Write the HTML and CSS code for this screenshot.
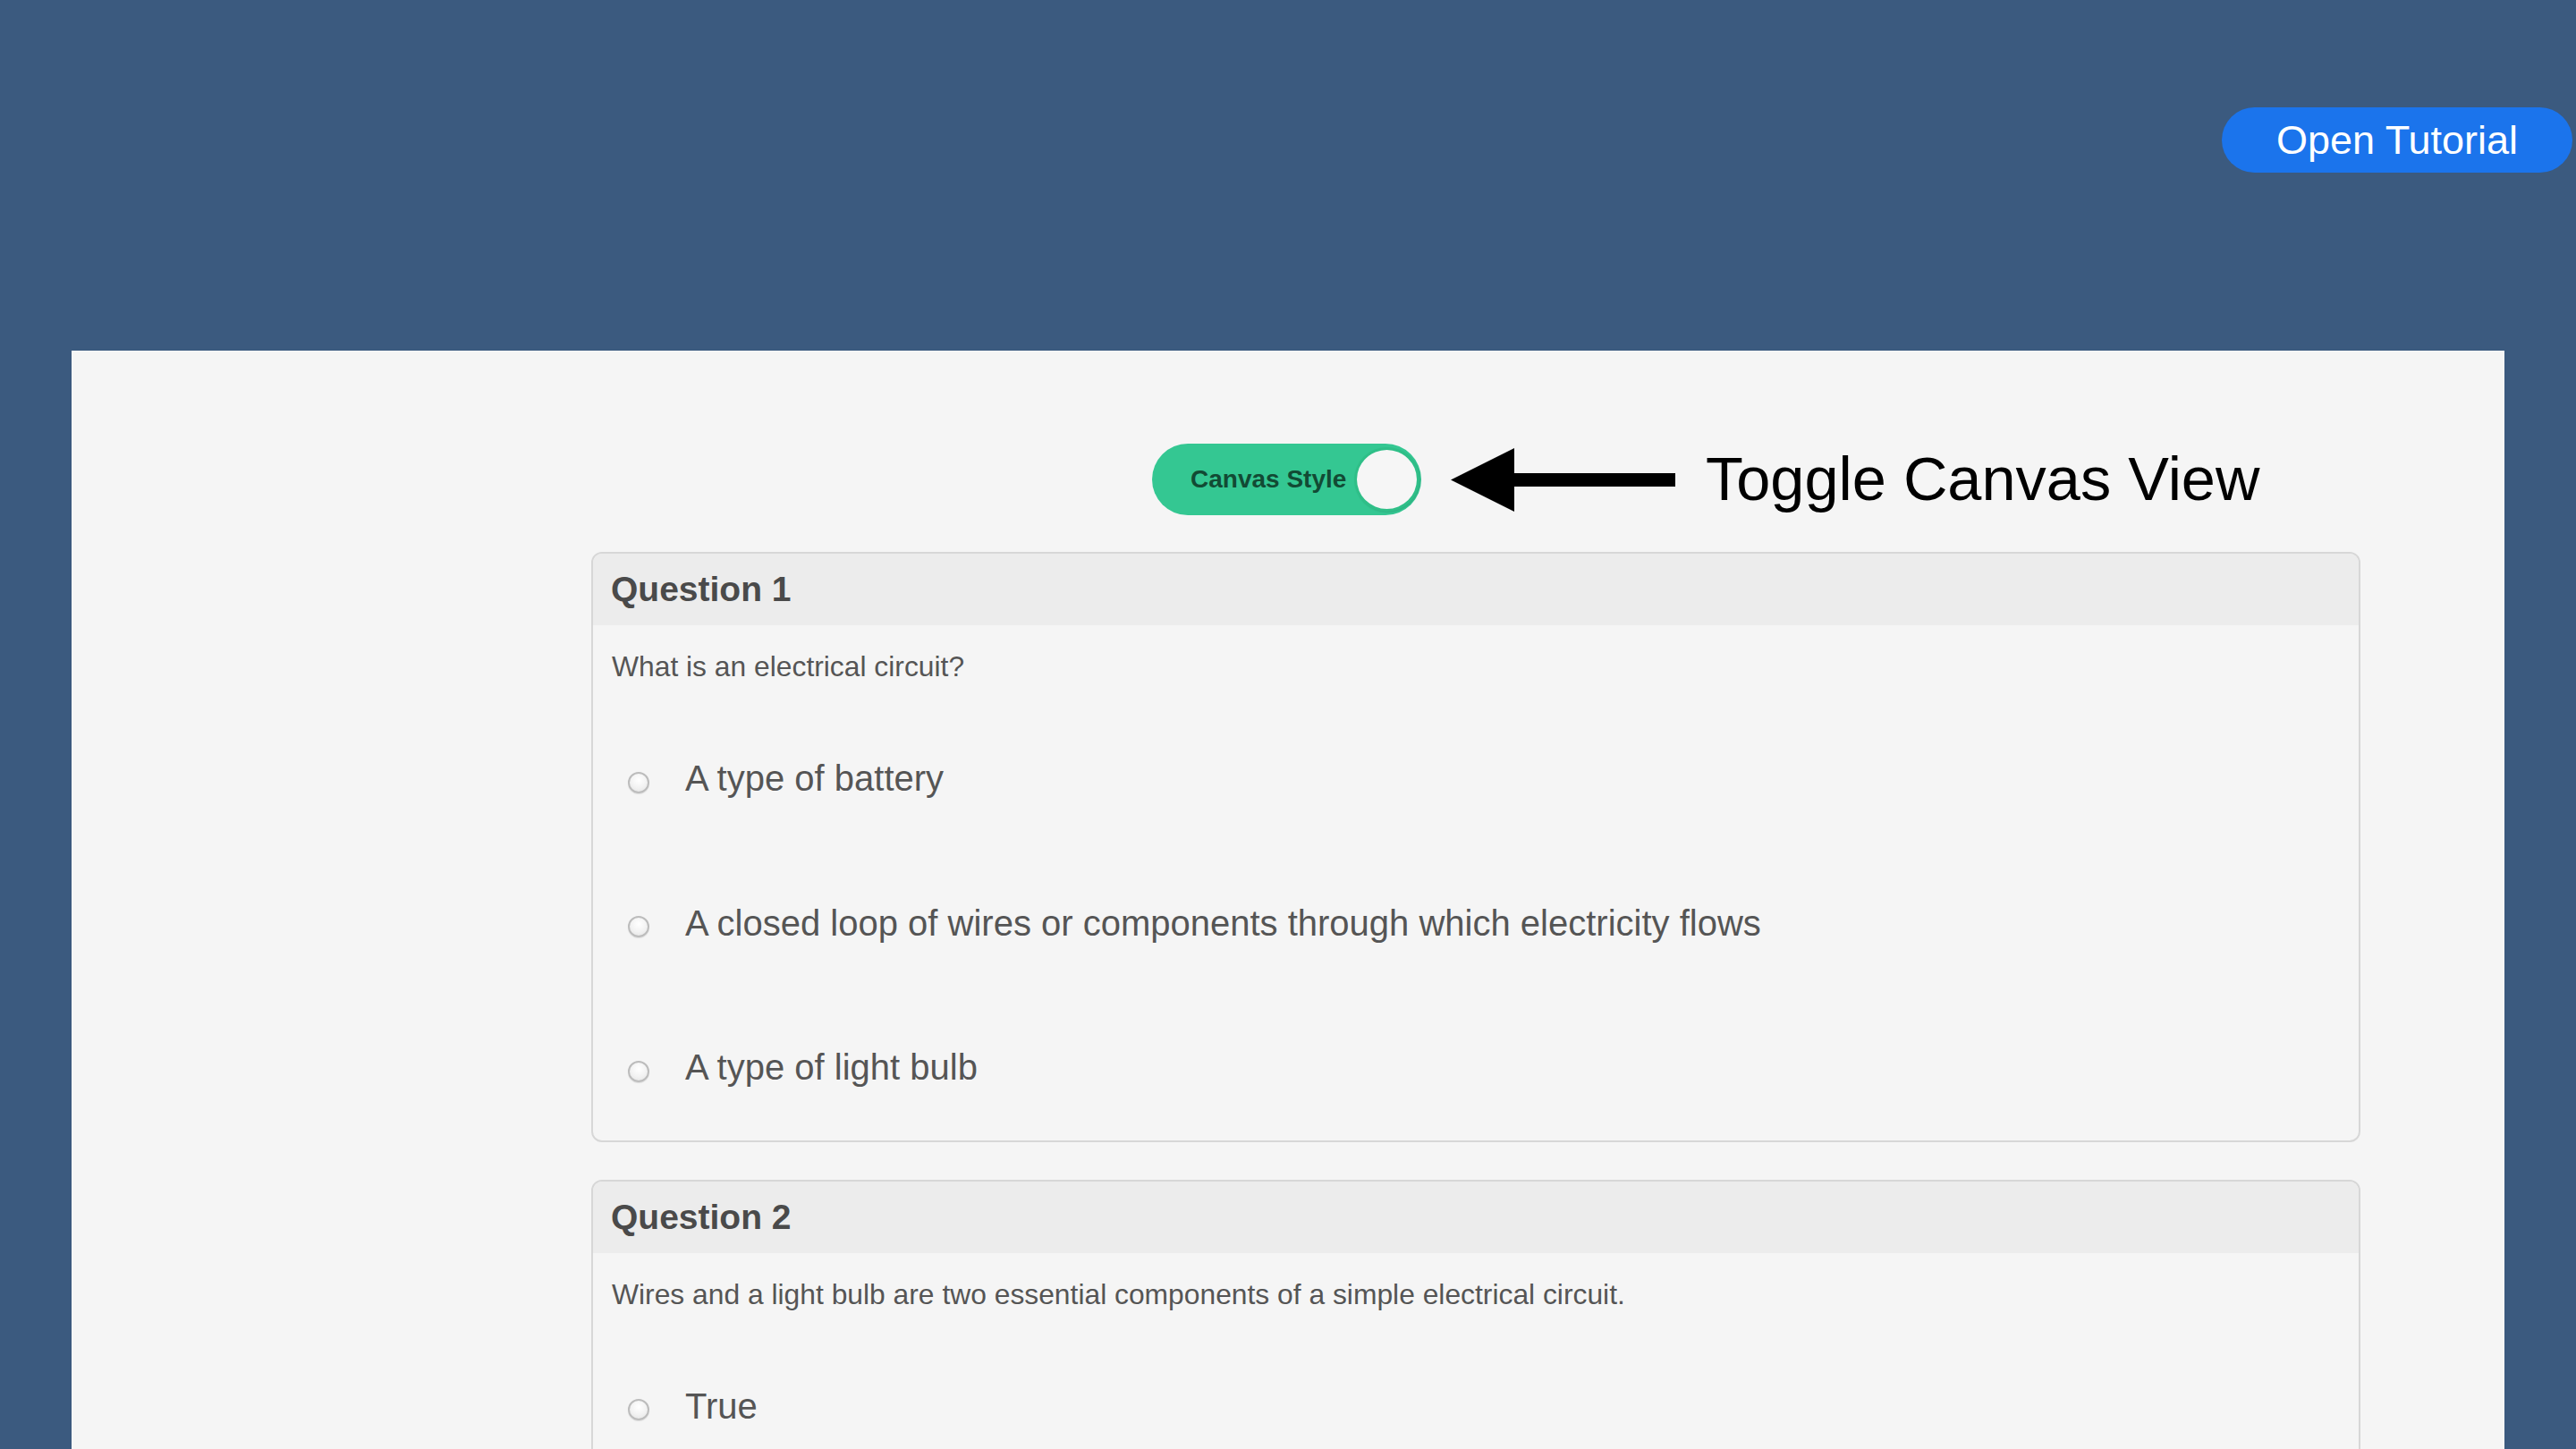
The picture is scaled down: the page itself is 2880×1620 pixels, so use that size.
FILE: index.html
```html
<!DOCTYPE html>
<html lang="en">
<head>
<meta charset="utf-8">
<title>Quiz</title>
<link rel="stylesheet" href="styles.css">
</head>
<body>
<header class="topbar">
  <button class="tutorial-btn">Open Tutorial</button>
</header>
<main class="panel">
  <div class="column">
    <div class="toggle-row">
      <div class="toggle">
        <span class="toggle-label">Canvas Style</span>
        <span class="toggle-knob"></span>
      </div>
      <svg class="arrow" width="251" height="71" viewBox="0 0 251 71">
        <polygon points="0,35.5 71,0 71,28 251,28 251,43 71,43 71,71" fill="#000"/>
      </svg>
      <span class="annotation">Toggle Canvas View</span>
    </div>

    <section class="card">
      <div class="card-header">Question 1</div>
      <div class="card-body">
        <p class="question">What is an electrical circuit?</p>
        <ul class="options">
          <li class="option"><span class="radio"></span><span class="option-text">A type of battery</span></li>
          <li class="option"><span class="radio"></span><span class="option-text">A closed loop of wires or components through which electricity flows</span></li>
          <li class="option"><span class="radio"></span><span class="option-text">A type of light bulb</span></li>
        </ul>
      </div>
    </section>

    <section class="card">
      <div class="card-header">Question 2</div>
      <div class="card-body">
        <p class="question">Wires and a light bulb are two essential components of a simple electrical circuit.</p>
        <ul class="options">
          <li class="option"><span class="radio"></span><span class="option-text">True</span></li>
        </ul>
      </div>
    </section>
  </div>
</main>
</body>
</html>
```

FILE: styles.css
```css
* { box-sizing: border-box; }

html, body {
  margin: 0;
  padding: 0;
}

body {
  background: #3b5a7f;
  font-family: "Liberation Sans", Arial, sans-serif;
  overflow: hidden;
}

.topbar {
  height: 392px;
  display: flex;
  justify-content: flex-end;
  align-items: flex-start;
  padding: 120px 4px 0 0;
}

.tutorial-btn {
  height: 73px;
  width: 392px;
  border: none;
  border-radius: 37px;
  background: #1b74ec;
  color: #ffffff;
  font-family: "Liberation Sans", Arial, sans-serif;
  font-size: 45px;
  padding: 0;
  cursor: pointer;
}

.panel {
  margin: 0 80px;
  background: #f5f5f5;
  min-height: 1300px;
  padding: 104px 161px 40px 581px;
}

.column {
  display: flex;
  flex-direction: column;
}

.toggle-row {
  display: flex;
  align-items: center;
  padding-left: 627px;
  height: 80px;
  margin-bottom: 41px;
}

.toggle {
  width: 301px;
  height: 80px;
  border-radius: 40px;
  background: #34c792;
  display: flex;
  align-items: center;
  justify-content: space-between;
  padding: 0 2px 0 43px;
}

.toggle-label {
  font-weight: bold;
  font-size: 28px;
  color: #124a34;
}

.toggle-knob {
  width: 73px;
  height: 72px;
  border-radius: 50%;
  background: #f6f6f6;
  border: 3px solid #2fbf88;
  box-shadow: 1px 1px 2px rgba(0, 0, 0, 0.12);
}

.arrow {
  margin-left: 33px;
  flex: none;
}

.annotation {
  margin-left: 34px;
  font-size: 68.5px;
  color: #000;
  white-space: nowrap;
  line-height: 80px;
}

.card {
  border: 2px solid #d7d7d7;
  border-radius: 12px;
  background: #f5f5f5;
  overflow: hidden;
  margin-bottom: 42px;
}

.card-header {
  height: 80px;
  line-height: 80px;
  background: #ececec;
  padding: 0 20px;
  font-size: 39px;
  font-weight: bold;
  color: #4a4a4a;
}

.card-body {
  padding: 0 21px;
}

.question {
  margin: 26px 0 25px;
  font-size: 31.8px;
  line-height: 40px;
  color: #555555;
}

.options {
  list-style: none;
  margin: 0;
  padding: 0;
}

.option {
  height: 161.5px;
  display: flex;
  align-items: center;
  padding-left: 18px;
}

.radio {
  width: 24px;
  height: 24px;
  margin-top: 8px;
  border-radius: 50%;
  border: 2px solid #bcbcbc;
  background: radial-gradient(circle at 50% 35%, #ffffff 0%, #f2f2f2 55%, #e0e0e0 100%);
  box-shadow: 0 1px 1px rgba(0,0,0,0.1);
  flex: none;
}

.option-text {
  margin-left: 40px;
  font-size: 40px;
  color: #555555;
}
```
